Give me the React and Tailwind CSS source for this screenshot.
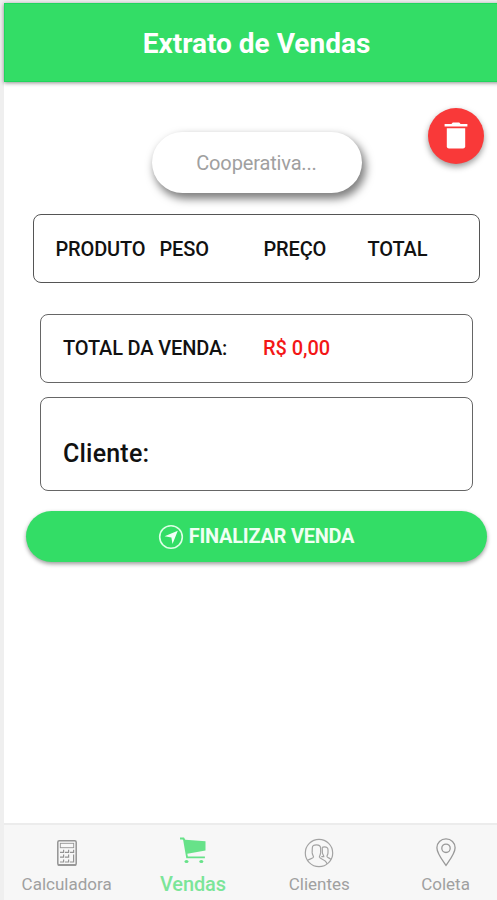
import React, { useState } from 'react';

function CalculatorIcon() {
  return (
    <svg width="20" height="26" viewBox="0 0 20 26" fill="none" stroke="#949494" strokeWidth="1.2">
      <rect x="0.8" y="0.8" width="18.4" height="24.2" rx="1.5" strokeWidth="1.5" />
      <rect x="3.3" y="3.3" width="13.4" height="4.4" strokeWidth="0.9" />
      <path d="M0.8 25h18.4" strokeWidth="1.6" />
      <path d="M3 12.3h3.6v-2.6M8 12.3h3.6v-2.6M13 12.3h3.6v-2.6M3 17.2h3.6v-2.6M8 17.2h3.6v-2.6M3 22h3.6v-2.6M8 22h3.6v-2.6M13 22h3.6v-7.4" />
    </svg>
  );
}

function CartIcon() {
  return (
    <svg width="26" height="27" viewBox="0 0 26 27" fill="#67e289">
      <path d="M0 0.600h4l1.300 2.200 20.200 1.400v9.400L7.300 16.800l.6 2.800h17v1.600H6.300L3.200 3.300 2.600 2.400H0z" />
      <ellipse cx="6.500" cy="24.400" rx="2" ry="1.500" />
      <ellipse cx="21.300" cy="24.400" rx="2" ry="1.500" />
    </svg>
  );
}

function PeopleIcon() {
  return (
    <svg width="30" height="30" viewBox="0 0 30 30" fill="none" stroke="#a3a3a3" strokeWidth="1.200">
      <circle cx="15" cy="15" r="13.700" />
      <path d="M3.500 22.500c1.300-1.700 5.600-1.700 6-3.300.2-1.100-1-1.700-1.300-4.300-.1-1.400.1-3.200.1-4.700 0-2.500 1.600-3.400 4.200-3.400s4.100.9 4.100 3.400c0 1.500.1 3.300 0 4.700-.3 2.600-1.400 3.200-1.200 4.300.4 1.900 6.400 2 7.600 6.600" />
      <path d="M18.200 9.500c.6-.5 1.300-.7 2.200-.7 2.300 0 3.600 1 3.600 3 0 1.300.1 2.800-.1 3.800-.2 1.400-1.100 1.900-.9 2.900.3 1.400 3.100 1.300 4 3.200M17.300 18.700h2.500c.1-1.400-1.200-1.900-1.400-4-.1-1.700 0-3.500-.2-5.200" />
    </svg>
  );
}

function PinIcon() {
  return (
    <svg width="20" height="29" viewBox="0 0 20 29" fill="none" stroke="#999" strokeWidth="1.3">
      <path d="M10 0.900C4.800.900.900 4.900.900 9.800c0 6 6.500 13.600 9.100 17.600 2.600-4 9.100-11.600 9.100-17.600C19.100 4.900 15.200.900 10 .900z" />
      <circle cx="10" cy="10.300" r="4.200" />
    </svg>
  );
}

function NavigateIcon() {
  return (
    <svg width="26" height="26" viewBox="0 0 26 26">
      <circle cx="13" cy="13" r="11.300" fill="none" stroke="#dcffe6" strokeWidth="1.600" />
      <path d="M19.800 6.800 14.500 20l-1.100-6.600-6.800-1.100z" fill="#f2fff6" />
    </svg>
  );
}

function TrashIcon() {
  return (
    <svg width="24" height="28" viewBox="0 0 24 28" fill="#fff">
      <path d="M0.600 1.900h6.800L8.800.4h6.400l1.400 1.500h6.800v2.700H0.600z" />
      <path d="M2.800 6.300h18.400v18a2.200 2.200 0 0 1-2.200 2.200H5a2.200 2.200 0 0 1-2.200-2.200z" />
    </svg>
  );
}

const tabs = [
  { id: 'calculadora', label: 'Calculadora', icon: CalculatorIcon },
  { id: 'vendas', label: 'Vendas', icon: CartIcon },
  { id: 'clientes', label: 'Clientes', icon: PeopleIcon },
  { id: 'coleta', label: 'Coleta', icon: PinIcon },
];

export default function App() {
  const [activeTab, setActiveTab] = useState('vendas');
  const [cooperativa, setCooperativa] = useState('');

  return (
    <div className="h-[900px] overflow-hidden bg-[#efefef] pl-1 pt-[3px] font-['Roboto',sans-serif] text-[#111]">
      <div className="flex h-[897px] w-[505px] flex-col bg-white">
        <header className="z-10 flex h-[79px] shrink-0 items-center justify-center border border-[#1fd65c] bg-[#33dd66] shadow-[0_1px_4px_rgba(0,0,0,0.45)]">
          <h1 className="whitespace-nowrap pt-0.5 text-[28px] font-bold leading-8 text-white">Extrato de Vendas</h1>
        </header>

        <main className="flex-1">
          <div className="flex h-[132px] items-start">
            <input
              value={cooperativa}
              onChange={(e) => setCooperativa(e.target.value)}
              placeholder="Cooperativa..."
              className="ml-[148px] mt-[50px] h-[61px] w-[210px] rounded-full bg-white pr-px text-center text-[20px] tracking-[-0.15px] shadow-[3px_5px_9px_1px_rgba(0,0,0,0.5)] outline-none placeholder:text-[#a0a0a0]"
            />
            <button className="ml-[66px] mt-[26px] flex size-14 items-center justify-center rounded-full bg-[#f93939] shadow-[0_3px_6px_rgba(0,0,0,0.4)]">
              <TrashIcon />
            </button>
          </div>

          <div className="ml-[29px] flex h-[69px] w-[447px] items-center rounded-[8px] border border-[#555] pl-[21.5px] text-[20px] font-medium tracking-[-0.15px]">
            <span className="w-[104px]">PRODUTO</span>
            <span className="w-[104px]">PESO</span>
            <span className="w-[104px]">PREÇO</span>
            <span>TOTAL</span>
          </div>

          <div className="ml-[36px] mt-[31px] flex h-[69px] w-[433px] items-center rounded-[8px] border border-[#666] pb-px pl-[22px] text-[20px] font-medium tracking-[-0.15px]">
            <span className="w-[200px]">TOTAL DA VENDA:</span>
            <span className="tracking-[-0.05px] text-[#f31616]">R$ 0,00</span>
          </div>

          <div className="ml-[36px] mt-[14px] h-[94px] w-[433px] rounded-[8px] border border-[#666] pl-[22px] pt-[40px] text-[25px] font-medium leading-8 tracking-[0.2px]">
            Cliente:
          </div>

          <button className="ml-[22px] mt-[20px] flex h-[51px] w-[461px] items-center justify-center gap-[5px] rounded-full bg-[#33dd66] pr-px text-[20px] font-bold tracking-[-0.25px] text-[#effff3] shadow-[0_2px_4px_rgba(0,0,0,0.4)]">
            <NavigateIcon />
            <span className="pb-[2px]">FINALIZAR VENDA</span>
          </button>
        </main>

        <nav className="flex h-[77px] shrink-0 border-t-2 border-[#ececec] bg-[#f7f7f7]">
          {tabs.map(({ id, label, icon: Icon }) => (
            <button
              key={id}
              onClick={() => setActiveTab(id)}
              className={`flex w-[126.300px] shrink-0 flex-col items-center pr-px ${activeTab === id ? 'pt-[10px] text-[20px] font-medium tracking-[-0.1px] text-[#7be599]' : 'pt-3 text-[17px] text-[#a0a0a0]'}`}
            >
              <span className="flex h-[31px] items-center"><Icon /></span>
              <span className={activeTab === id ? 'mt-[6px] leading-6' : 'mt-[4px] leading-6'}>{label}</span>
            </button>
          ))}
        </nav>
      </div>
    </div>
  );
}
